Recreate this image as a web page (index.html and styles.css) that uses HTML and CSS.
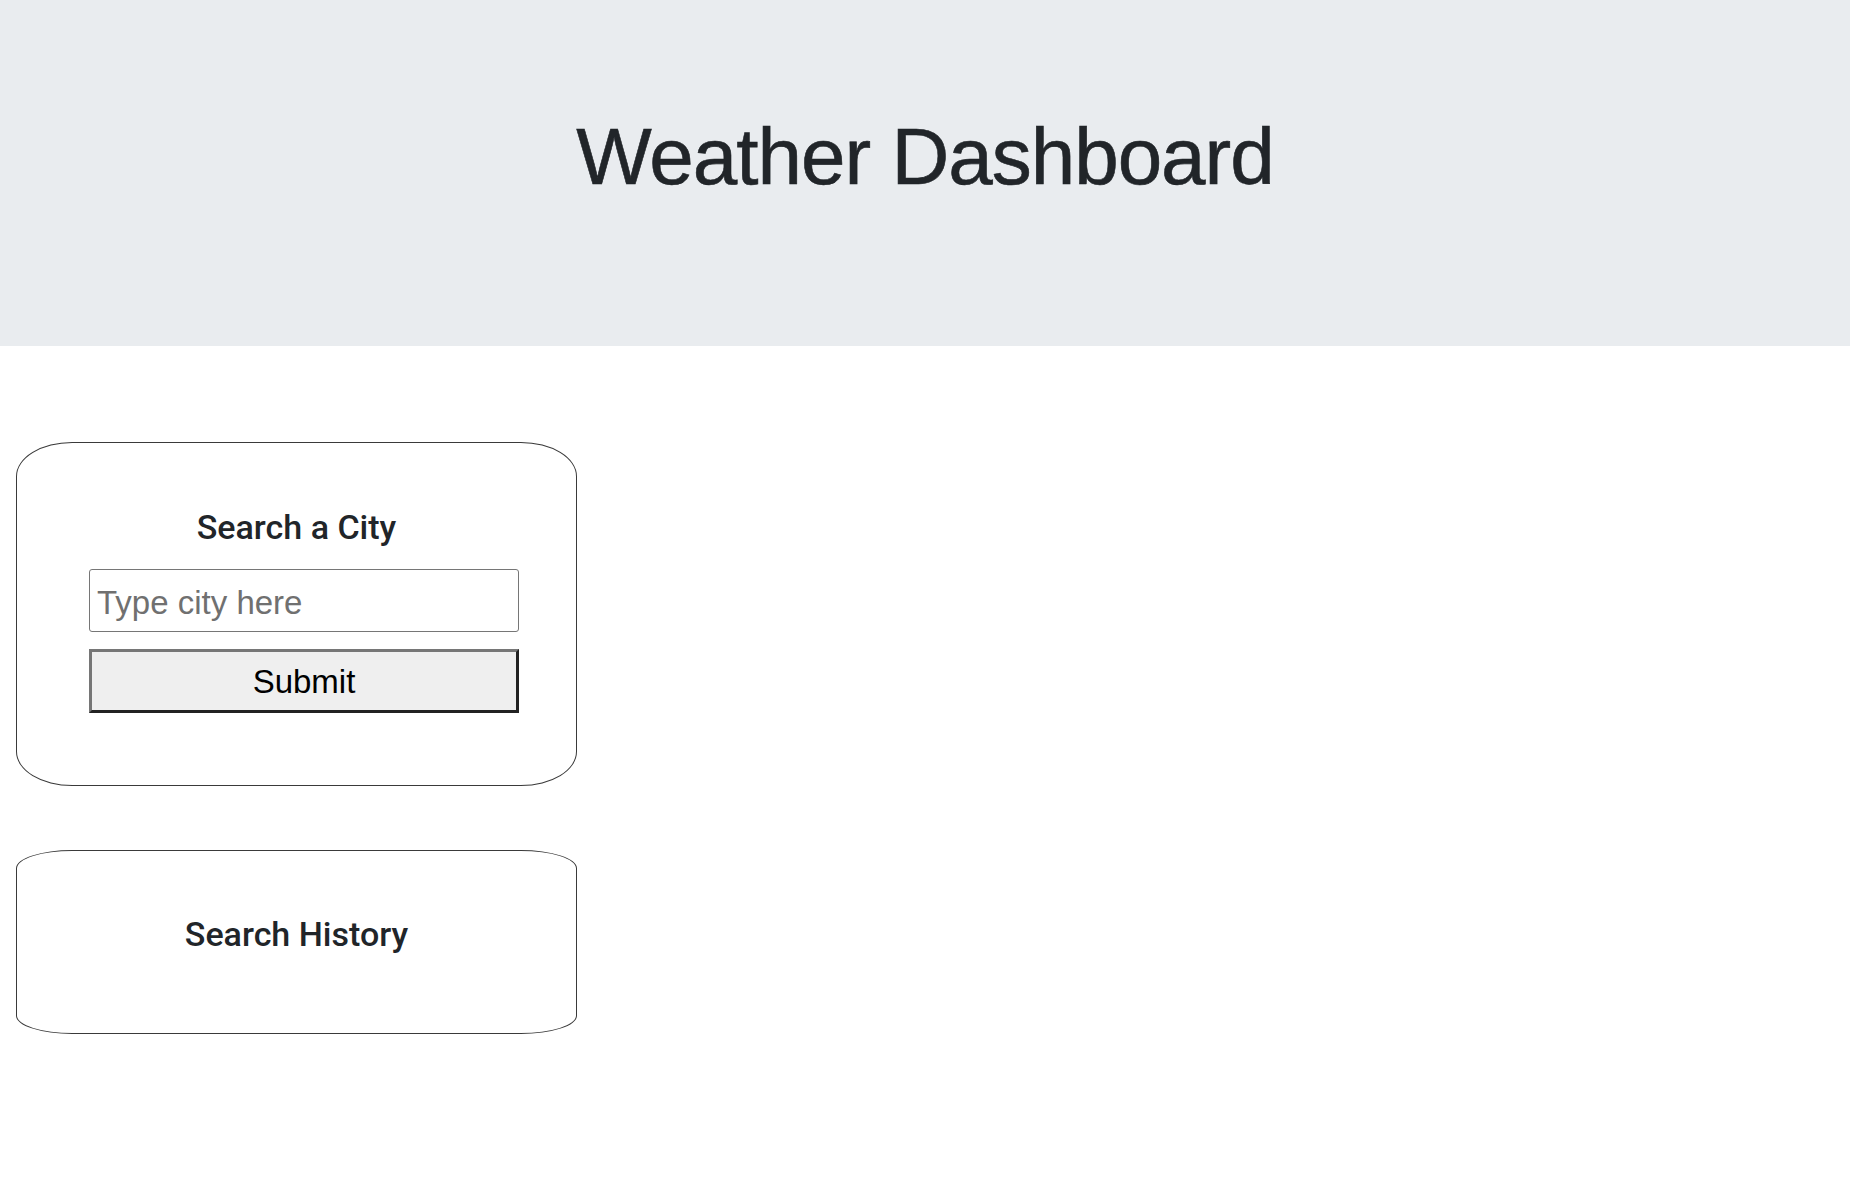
FILE: index.html
```html
<!DOCTYPE html>
<html lang="en">
<head>
<meta charset="utf-8">
<title>Weather Dashboard</title>
<link rel="stylesheet" href="styles.css">
</head>
<body>
  <header class="hero">
    <h1 class="hero-title">Weather Dashboard</h1>
  </header>
  <main class="main">
    <aside class="sidebar">
      <section class="card card-search">
        <h2 class="card-title">Search a City</h2>
        <form class="search-form">
          <input class="city-input" type="text" placeholder="Type city here">
          <button class="submit-btn" type="button">Submit</button>
        </form>
      </section>
      <section class="card card-history">
        <h2 class="card-title">Search History</h2>
      </section>
    </aside>
  </main>
</body>
</html>
```

FILE: styles.css
```css
html, body {
  margin: 0;
  padding: 0;
  background: #ffffff;
}

body {
  font-family: "Liberation Sans", Arial, sans-serif;
  color: #212529;
}

.hero {
  background: #e9ecef;
  height: 346px;
  box-sizing: border-box;
  padding-top: 109px;
}

.hero-title {
  margin: 0;
  text-align: center;
  font-family: "Liberation Sans", Arial, sans-serif;
  font-size: 80px;
  font-weight: 400;
  line-height: 1.2;
  letter-spacing: -1px;
  color: #212529;
  -webkit-text-stroke: 0.6px #212529;
}

.main {
  padding: 96px 0 0 16px;
}

.sidebar {
  display: flex;
  flex-direction: column;
  gap: 64px;
  width: 561px;
}

.card {
  border: 1px solid #3a3a3a;
  border-radius: 10%;
  box-sizing: border-box;
}

.card-search {
  padding: 64px 0 72px;
}

.card-history {
  padding: 63px 0 78px;
}

.card-title {
  margin: 0;
  text-align: center;
  font-family: Roboto, "Liberation Sans", sans-serif;
  font-size: 34px;
  font-weight: 500;
  line-height: 1.2;
  color: #212529;
}

.card-search .card-title {
  margin-bottom: 21px;
}

.search-form {
  display: flex;
  flex-direction: column;
  align-items: flex-start;
  gap: 17px;
  padding-left: 72px;
}

.city-input {
  width: 430px;
  height: 63px;
  box-sizing: border-box;
  border: 1px solid #767676;
  border-radius: 3px;
  padding: 5px 7px 0;
  margin: 0;
  font-family: "Liberation Sans", Arial, sans-serif;
  font-size: 33px;
  color: #000;
  background: #fff;
  outline: none;
}

.city-input::placeholder {
  color: #707070;
}

.submit-btn {
  width: 430px;
  height: 64px;
  box-sizing: border-box;
  margin: 0;
  padding: 2px 0 0;
  background: #efefef;
  border-style: solid;
  border-width: 3px;
  border-color: #767676 #222222 #222222 #767676;
  border-radius: 0;
  font-family: "Liberation Sans", Arial, sans-serif;
  font-size: 33px;
  color: #000;
  cursor: pointer;
}
```
